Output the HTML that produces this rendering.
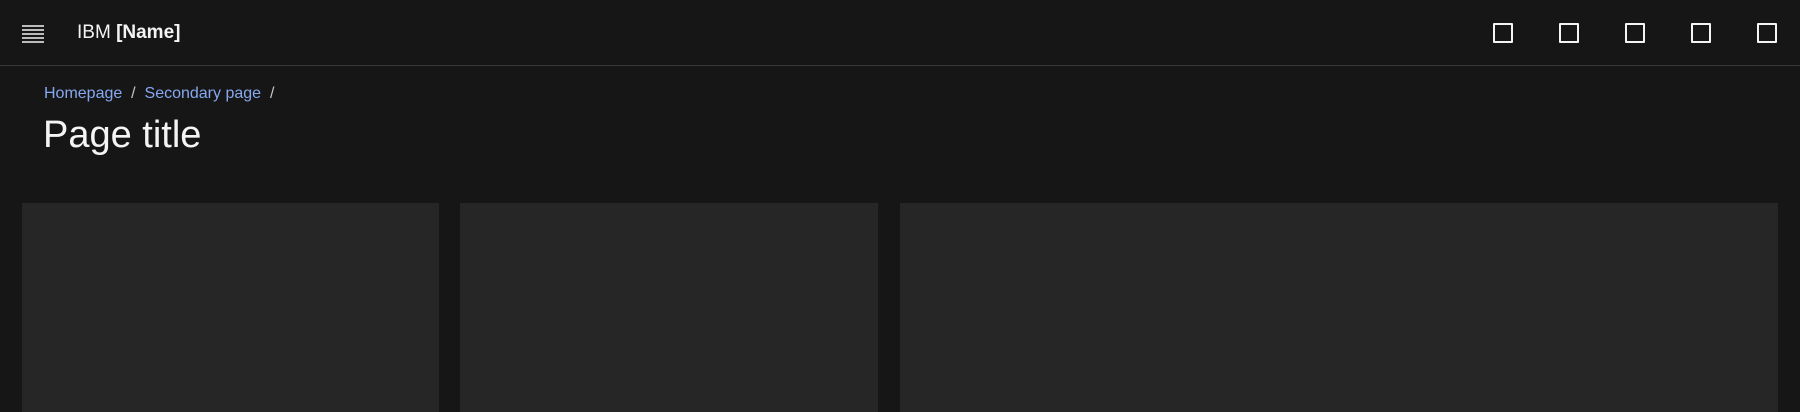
<!DOCTYPE html>
<html><head><style>
body{margin:0;width:1800px;height:412px;background:#161616;overflow:hidden;font-family:"Liberation Sans",sans-serif;position:relative}
.hdr{position:absolute;left:0;top:0;width:1800px;height:65px;border-bottom:1px solid #393939;background:#161616}
.abs{position:absolute}
.sq{position:absolute;top:23px;width:16px;height:16px;border:2px solid #f4f4f4;border-radius:1px}
.card{position:absolute;top:203px;height:209px;background:#262626}
</style></head><body>
<div class="hdr"></div>
<svg class="abs" style="left:22px;top:25px" width="22" height="18"><g stroke="#f4f4f4" stroke-width="1.5"><line x1="0" y1="1" x2="22" y2="1"/><line x1="0" y1="5" x2="22" y2="5"/><line x1="0" y1="9" x2="22" y2="9"/><line x1="0" y1="13" x2="22" y2="13"/><line x1="0" y1="17" x2="22" y2="17"/></g></svg>
<div class="abs" style="left:77px;top:20px;font-size:19px;color:#f4f4f4;line-height:24px;top:21px">IBM <b>[Name]</b></div>
<div class="sq" style="left:1493px"></div>
<div class="sq" style="left:1559px"></div>
<div class="sq" style="left:1625px"></div>
<div class="sq" style="left:1691px"></div>
<div class="sq" style="left:1757px"></div>
<div class="abs" style="left:44px;top:84px;font-size:16px;line-height:20px;color:#c6c6c6"><span style="color:#86a8f0">Homepage</span>&nbsp; /&nbsp; <span style="color:#86a8f0">Secondary page</span>&nbsp; /</div>
<div class="abs" style="left:43px;top:112px;font-size:38px;line-height:46px;color:#f4f4f4">Page title</div>
<div class="card" style="left:22px;width:417px"></div>
<div class="card" style="left:460px;width:418px"></div>
<div class="card" style="left:900px;width:878px"></div>
</body></html>
